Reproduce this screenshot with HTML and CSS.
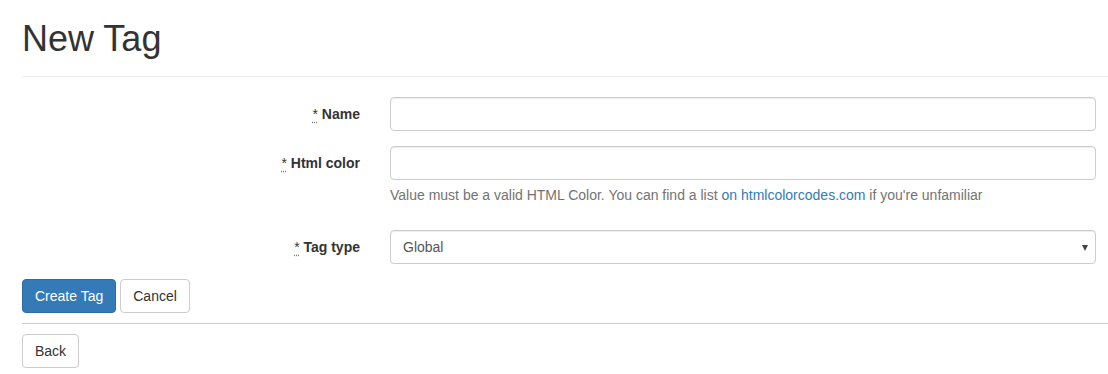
FILE: index.html
```html
<!DOCTYPE html>
<html lang="en">
<head>
    <meta charset="UTF-8">
    <title>New Tag</title>
    <link rel="stylesheet" href="styles.css">
</head>
<body>

    <div class="page">
        <div class="page-header">
            <h1>New Tag</h1>
        </div>

        <form class="tag-form">
            <div class="form-group">
                <label class="control-label" for="tag_name"><abbr title="required">*</abbr> Name</label>
                <div class="control">
                    <input class="form-control" type="text" id="tag_name">
                </div>
            </div>

            <div class="form-group">
                <label class="control-label" for="tag_color"><abbr title="required">*</abbr> Html color</label>
                <div class="control">
                    <input class="form-control" type="text" id="tag_color">
                    <p class="help-block">Value must be a valid HTML Color. You can find a list <a href="#">on htmlcolorcodes.com</a> if you're unfamiliar</p>
                </div>
            </div>

            <div class="form-group">
                <label class="control-label" for="tag_type"><abbr title="required">*</abbr> Tag type</label>
                <div class="control">
                    <div class="select-wrap">
                        <select class="form-control" id="tag_type">
                            <option>Global</option>
                        </select>
                    </div>
                </div>
            </div>

            <div class="actions">
                <button type="button" class="btn btn-primary">Create Tag</button>
                <button type="button" class="btn">Cancel</button>
            </div>
        </form>

        <hr class="divider">

        <div class="actions">
            <button type="button" class="btn">Back</button>
        </div>
    </div>

</body>
</html>
```

FILE: styles.css
```css
/* Base */
body {
    margin: 0;
    font-family: "Liberation Sans", Arial, sans-serif;
    font-size: 14px;
    line-height: 20px;
    color: #333;
    background: #fff;
}

.page {
    padding: 0 0 0 22px;
}

/* Header */
.page-header {
    padding-top: 19px;
    padding-bottom: 17px;
    border-bottom: 1px solid #eee;
    margin-bottom: 20px;
}

.page-header h1 {
    margin: 0;
    font-size: 36px;
    font-weight: 500;
    line-height: 39.6px;
    color: #333;
}

/* Form */
.tag-form {
    padding-right: 12px;
}

.form-group {
    display: flex;
    margin-bottom: 15px;
}

.control-label {
    flex: none;
    width: 368px;
    box-sizing: border-box;
    padding-top: 7px;
    padding-right: 30px;
    text-align: right;
    font-weight: bold;
}

.control-label abbr {
    font-weight: normal;
    text-decoration: underline dotted #777;
    text-underline-offset: 3px;
    cursor: help;
}

.control {
    flex: 1;
}

.form-control {
    display: block;
    width: 100%;
    height: 34px;
    padding: 6px 12px;
    box-sizing: border-box;
    font-family: inherit;
    font-size: 14px;
    line-height: 20px;
    color: #555;
    background: #fff;
    border: 1px solid #ccc;
    border-radius: 4px;
    box-shadow: inset 0 1px 1px rgba(0, 0, 0, 0.075);
}

.help-block {
    margin: 5px 0 10px;
    color: #737373;
}

.help-block a {
    color: #337ab7;
    text-decoration: none;
}

/* Select arrow */
.select-wrap {
    position: relative;
}

.select-wrap select {
    appearance: none;
    -webkit-appearance: none;
}

.select-wrap::after {
    content: "";
    position: absolute;
    right: 8px;
    top: 15px;
    border-left: 3.5px solid transparent;
    border-right: 3.5px solid transparent;
    border-top: 6px solid #444;
}

/* Buttons */
.actions {
    display: flex;
    gap: 4px;
}

.btn {
    font-family: inherit;
    font-size: 14px;
    line-height: 20px;
    padding: 6px 12px;
    color: #333;
    background: #fff;
    border: 1px solid #ccc;
    border-radius: 4px;
    cursor: pointer;
}

.btn-primary {
    color: #fff;
    background: #337ab7;
    border-color: #2e6da4;
}

.divider {
    margin: 10px 0;
    border: 0;
    border-top: 1px solid #ccc;
}
```
